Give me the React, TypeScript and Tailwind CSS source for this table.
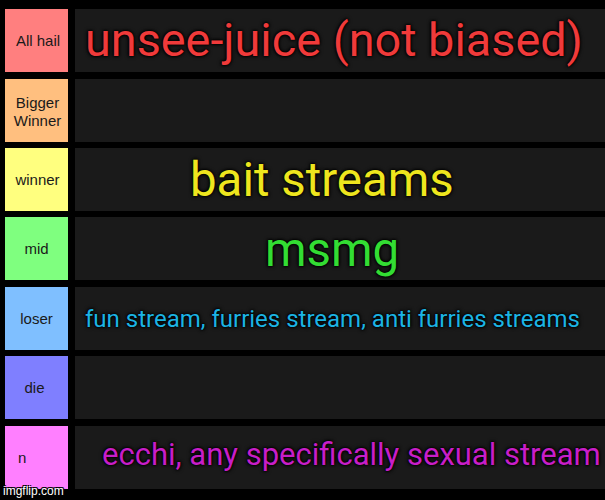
import React from "react";

type Row = {
  label: React.ReactNode;
  bg: string;
  labelCls: string;
  mt: string;
  content?: React.ReactNode;
};

const glow = "[text-shadow:0_0_4px_#000,0_0_3px_#000,0_0_2px_#000]";

export default function App() {
  const rows: Row[] = [
    {
      label: "All hail",
      bg: "bg-[#FF7F7F]",
      labelCls: "justify-center pl-[3px]",
      mt: "mt-0",
      content: (
        <div className={`pl-[10px] text-[46.8px] leading-none text-[#F03A3A] ${glow}`}>
          unsee-juice (not biased)
        </div>
      ),
    },
    {
      label: (
        <span className="block text-center leading-[18px]">
          Bigger
          <br />
          Winner
        </span>
      ),
      bg: "bg-[#FFBF7F]",
      labelCls: "justify-center pl-[2px]",
      mt: "mt-[7px]",
    },
    {
      label: "winner",
      bg: "bg-[#FFFF7F]",
      labelCls: "justify-center pl-[2px]",
      mt: "mt-[6px]",
      content: (
        <div className={`pl-[115px] pt-[2px] text-[47.4px] leading-none text-[#EEE61E] ${glow}`}>
          bait streams
        </div>
      ),
    },
    {
      label: "mid",
      bg: "bg-[#7FFF7F]",
      labelCls: "justify-center",
      mt: "mt-[6px]",
      content: (
        <div className={`pl-[190px] pt-[4px] text-[47.4px] leading-none text-[#33DD33] ${glow}`}>
          msmg
        </div>
      ),
    },
    {
      label: "loser",
      bg: "bg-[#7FBFFF]",
      labelCls: "justify-center",
      mt: "mt-[7px]",
      content: (
        <div className={`pl-[10px] text-[24px] leading-none text-[#1CB4E4] ${glow}`}>
          fun stream, furries stream, anti furries streams
        </div>
      ),
    },
    {
      label: "die",
      bg: "bg-[#7F7FFF]",
      labelCls: "justify-center pr-[4px]",
      mt: "mt-[6px]",
    },
    {
      label: "n",
      bg: "bg-[#FF7FFF]",
      labelCls: "justify-start pl-[13px]",
      mt: "mt-[7px]",
      content: (
        <div className={`pl-[27px] pb-[6px] text-[31px] leading-none text-[#C81EC8] ${glow}`}>
          ecchi, any specifically sexual stream
        </div>
      ),
    },
  ];

  return (
    <div className="relative w-[605px] h-[500px] bg-black overflow-hidden">
      <div className="flex flex-col pt-[9px]">
        {rows.map((r, i) => (
          <div key={i} className={`flex h-[63px] gap-[7px] ${r.mt}`}>
            <div
              className={`flex items-center w-[63px] ml-[5px] pt-[2px] shrink-0 ${r.bg} ${r.labelCls} text-[15px] text-[#1a1a1a] font-['Liberation_Sans',Arial,sans-serif]`}
            >
              {r.label}
            </div>
            <div className="flex items-center flex-1 bg-[#1A1A1A] font-['Roboto',sans-serif] whitespace-nowrap">
              {r.content}
            </div>
          </div>
        ))}
      </div>
      <div className="absolute left-[3px] top-[485px] text-[12px] leading-[12px] text-white font-['Liberation_Sans',Arial,sans-serif] [text-shadow:-1px_-1px_0_#000,1px_-1px_0_#000,-1px_1px_0_#000,1px_1px_0_#000]">
        imgflip.com
      </div>
    </div>
  );
}
